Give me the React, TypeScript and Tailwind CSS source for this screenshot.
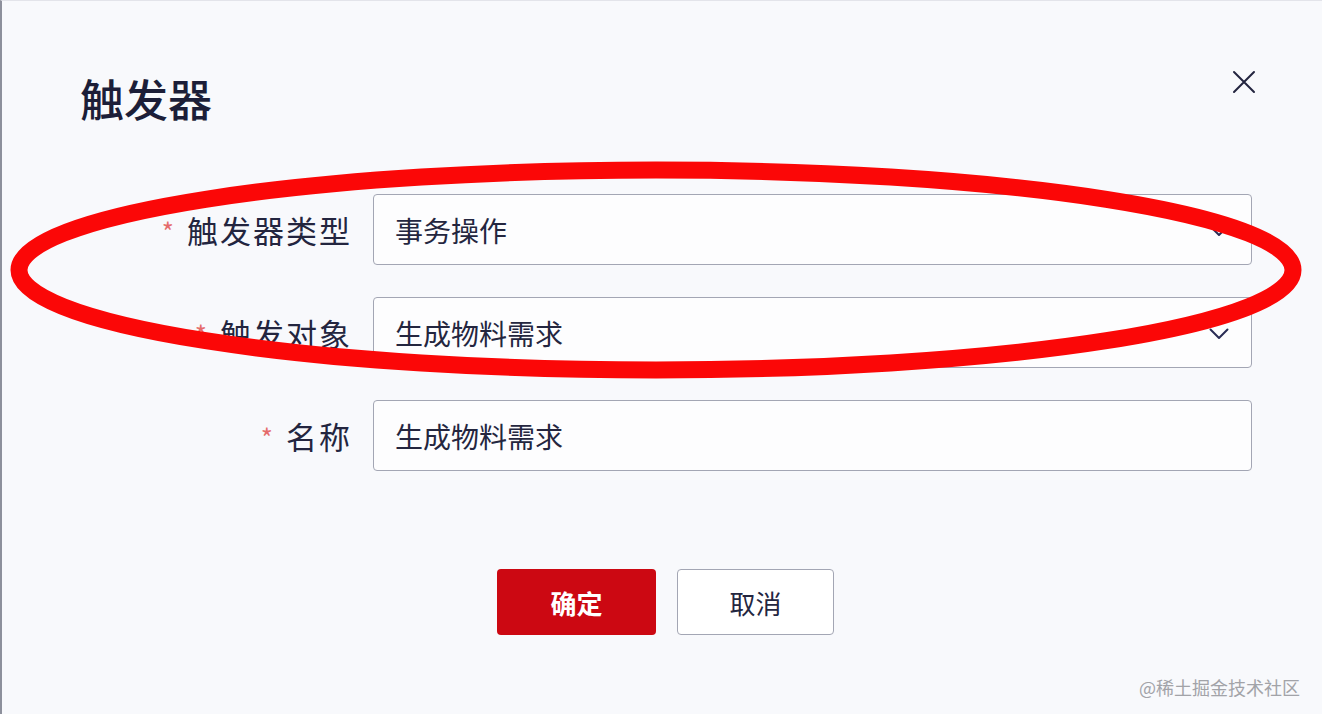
const fieldClass =
  'h-[71px] w-[879px] rounded-[4px] border border-[#a3a6b4] bg-[#fdfdfe] pl-[21px] pr-[22px] flex items-center justify-between text-[28px] text-[#24263f]';

function Label({ text }: { text: string }) {
  return (
    <div className="w-[371px] shrink-0 pr-[21px] flex items-center justify-end">
      <span className="text-[#e56b6b] text-[26px] leading-none mr-[13px] mt-[2px]">*</span>
      <span className="text-[31px] tracking-[2px] text-[#23253f] leading-none">{text}</span>
    </div>
  );
}

function Chevron() {
  return (
    <svg width="20" height="12" viewBox="0 0 20 12" fill="none" className="mt-[2px]">
      <path d="M1.5 1.5 L10 10 L18.5 1.5" stroke="#2a2c55" strokeWidth="2" strokeLinecap="round" strokeLinejoin="round" />
    </svg>
  );
}

export default function App() {
  return (
    <div
      className="relative w-[1322px] h-[714px] overflow-hidden bg-[#f8f9fc] border-l-2 border-t border-l-[#8d909c] border-t-[#e3e4ea]"
      style={{ fontFamily: '"Noto Sans CJK SC", "Noto Sans", sans-serif' }}
    >
      {/* header */}
      <div className="flex items-start justify-between pt-[69px] pl-[78px] pr-[66px]">
        <h2 className="mt-[6px] text-[44px] leading-none font-medium text-[#1c1e38]">触发器</h2>
        <button>
          <svg width="24" height="24" viewBox="0 0 24 24" fill="none">
            <path d="M2 2 L22 22 M22 2 L2 22" stroke="#23253f" strokeWidth="2" strokeLinecap="round" />
          </svg>
        </button>
      </div>

      {/* form */}
      <div className="mt-[74px] flex flex-col gap-[32px]">
        <div className="flex">
          <Label text="触发器类型" />
          <div className={fieldClass}>
            <span>事务操作</span>
            <Chevron />
          </div>
        </div>
        <div className="flex">
          <Label text="触发对象" />
          <div className={fieldClass}>
            <span>生成物料需求</span>
            <Chevron />
          </div>
        </div>
        <div className="flex">
          <Label text="名称" />
          <div className={fieldClass}>
            <span>生成物料需求</span>
          </div>
        </div>
      </div>

      {/* actions */}
      <div className="mt-[98px] pl-[495px] flex gap-[21px]">
        <button className="h-[66px] w-[159px] rounded-[4px] bg-[#cc0812] text-white text-[26px] font-bold">
          确定
        </button>
        <button className="h-[66px] w-[157px] rounded-[4px] border border-[#a3a6b4] bg-white text-[#24263f] text-[26px]">
          取消
        </button>
      </div>

      <div className="absolute right-[22px] bottom-[18px] text-[18px] leading-none text-[#a2a3a8]">
        @稀土掘金技术社区
      </div>

      {/* annotation */}
      <svg className="absolute left-[-2px] top-[-1px] pointer-events-none" width="1322" height="714">
        <ellipse cx="656" cy="270" rx="637" ry="100" fill="none" stroke="#fb0707" strokeWidth="17" />
      </svg>
    </div>
  );
}
